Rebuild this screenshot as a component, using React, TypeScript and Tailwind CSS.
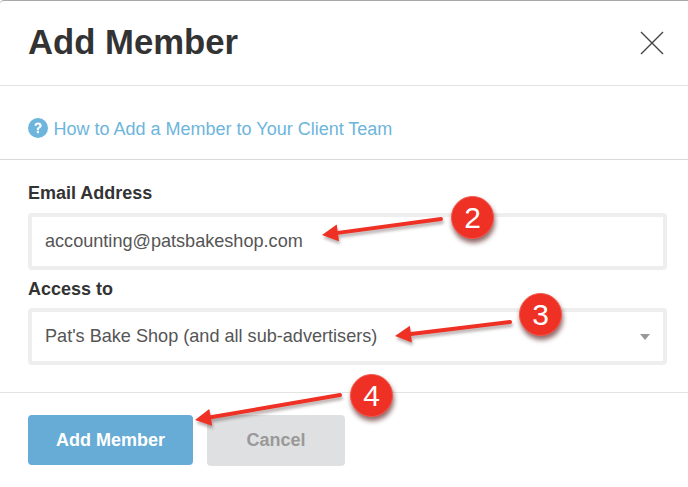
const font = "font-['Liberation_Sans',Arial,sans-serif]";

// red numbered marker drawn on top of the screenshot
function Badge({ n, className }: { n: number; className: string }) {
  return (
    <div
      className={`absolute w-[43px] h-[43px] rounded-full bg-[#ee3124] border border-[#f4574c] shadow-[1px_4px_5px_rgba(70,0,0,0.6)] flex items-center justify-center text-white text-[30px] leading-none ${className}`}
    >
      {n}
    </div>
  );
}

function Arrow({ x1, y1, x2, y2 }: { x1: number; y1: number; x2: number; y2: number }) {
  const angle = Math.atan2(y2 - y1, x2 - x1);
  const ux = Math.cos(angle);
  const uy = Math.sin(angle);
  const bx = x2 - ux * 16;
  const by = y2 - uy * 16;
  const head = `${x2},${y2} ${bx - uy * 8.5},${by + ux * 8.5} ${bx + uy * 8.5},${by - ux * 8.5}`;
  return (
    <g>
      <g transform="translate(1,3)" opacity="0.35" fill="#402020" stroke="#402020" filter="url(#soft)">
        <line x1={x1} y1={y1} x2={bx} y2={by} strokeWidth="4" strokeLinecap="round" />
        <polygon points={head} stroke="none" />
      </g>
      <line x1={x1} y1={y1} x2={bx} y2={by} stroke="#ee3124" strokeWidth="4" strokeLinecap="round" />
      <polygon points={head} fill="#ee3124" />
    </g>
  );
}

export default function App() {
  return (
    <div className={`relative w-[688px] h-[487px] overflow-hidden bg-white text-[#333] ${font}`}>
      <div className="h-[86px] border-t border-t-[#a8a8a8] border-b border-b-[#e3e3e3] rounded-tl-[4px] pl-7 pr-6 flex items-center justify-between">
        <h1 className="text-[34.7px] font-bold leading-none mt-[-2px]">Add Member</h1>
        <svg width="24" height="24" viewBox="0 0 24 24" className="mt-[-1px]" stroke="#444" strokeWidth="1.4" fill="none">
          <path d="M1 1 L23 23 M23 1 L1 23" />
        </svg>
      </div>

      <div className="h-[74px] border-b border-b-[#d9d9d9] pl-7 pt-[31px] flex items-start gap-[6px] text-[#6db5dc] text-[18px] leading-[24px]">
        <HelpCircleFilled />
        <span>How to Add a Member to Your Client Team</span>
      </div>

      <div className="px-7 pt-[23px] h-[233px] border-b border-b-[#e3e3e3]">
        <label className="block text-[18px] font-bold leading-5 mb-[10px]">Email Address</label>
        <div className="w-[639px] h-[57px] border-4 border-[#eeeeee] rounded-[4px] flex items-center pl-[13px] text-[18.1px] text-[#555]">
          accounting@patsbakeshop.com
        </div>
        <label className="block text-[18px] font-bold leading-5 mt-[9px] mb-[9px]">Access to</label>
        <div className="w-[639px] h-[57px] border-4 border-[#eeeeee] rounded-[4px] flex items-center justify-between pl-[13px] pr-[13px] text-[18.1px] text-[#555]">
          <span>Pat's Bake Shop (and all sub-advertisers)</span>
          <span className="w-0 h-0 border-x-[5.5px] border-x-transparent border-t-[6px] border-t-[#999]" />
        </div>
      </div>

      <div className="px-7 pt-[22px] flex items-start gap-[14px]">
        <button className="w-[165px] h-[50px] rounded-[4px] bg-[#66acd6] text-white text-[18px] font-bold">Add Member</button>
        <button className="w-[138px] h-[51px] rounded-[4px] bg-[#dfe0e1] text-[#999] text-[18px] font-bold">Cancel</button>
      </div>

      <svg className="absolute inset-0 pointer-events-none" width="688" height="487">
        <defs>
          <filter id="soft" x="-20%" y="-50%" width="140%" height="200%">
            <feGaussianBlur stdDeviation="1.5" />
          </filter>
        </defs>
        <Arrow x1={441} y1={219} x2={322} y2={235} />
        <Arrow x1={510} y1={322} x2={395} y2={336} />
        <Arrow x1={340} y1={395} x2={195} y2={420} />
      </svg>
      <Badge n={2} className="left-[451px] top-[196px]" />
      <Badge n={3} className="left-[519px] top-[293px]" />
      <Badge n={4} className="left-[350px] top-[374px]" />
    </div>
  );
}

function HelpCircleFilled() {
  return (
    <svg width="20" height="20" viewBox="0 0 20 20" className="mt-[1px] ml-[-0.5px]">
      <circle cx="10" cy="10" r="10" fill="#6db5dc" />
      <path d="M6.4 7.6 C6.6 5.4 8.1 4.4 10 4.4 C12.1 4.4 13.7 5.6 13.7 7.5 C13.7 9 12.8 9.6 11.8 10.3 C11.2 10.7 11 11 11 11.9 L8.8 11.9 C8.8 10.5 9.2 9.8 10.1 9.2 C10.9 8.7 11.4 8.4 11.4 7.8 C11.4 7 10.8 6.6 10 6.6 C9.2 6.6 8.7 7.1 8.6 8 Z" fill="#fff" />
      <rect x="8.8" y="12.8" width="2.2" height="2.4" fill="#fff" />
    </svg>
  );
}
